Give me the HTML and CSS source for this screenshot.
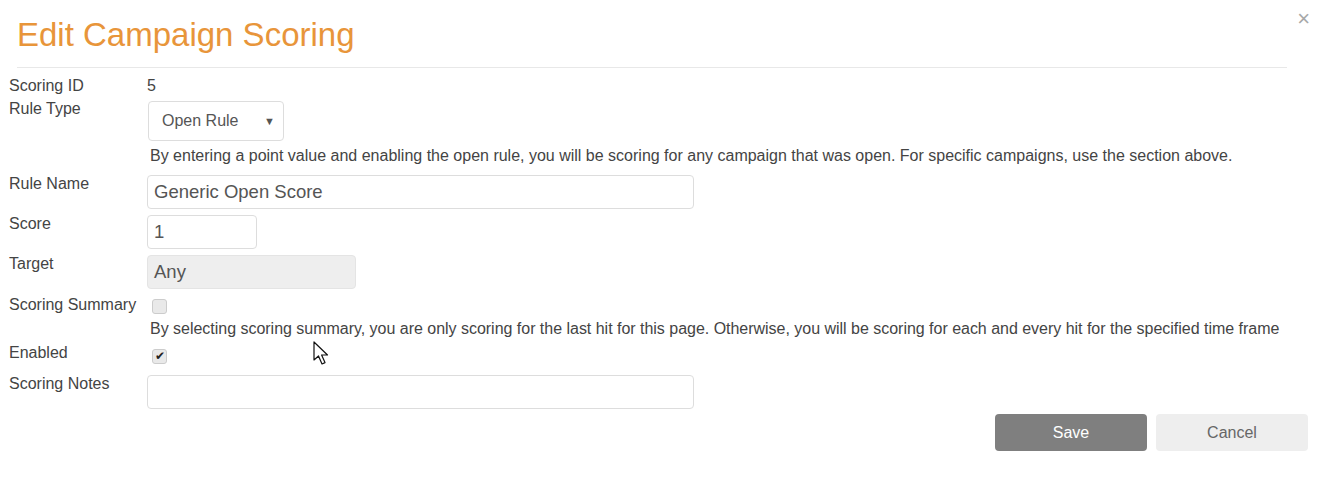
FILE: index.html
```html
<!DOCTYPE html>
<html>
<head>
<meta charset="utf-8">
<link rel="stylesheet" href="styles.css">
</head>
<body>
<div class="modal">
  <div class="header">
    <h1 class="title">Edit Campaign Scoring</h1>
    <span class="close">×</span>
  </div>
  <div class="form">
    <div class="row r-id">
      <div class="label">Scoring ID</div>
      <div class="value">5</div>
    </div>
    <div class="row r-type">
      <div class="label">Rule Type</div>
      <div class="value">
        <div class="select"><span>Open Rule</span><span class="caret">▼</span></div>
        <div class="help help1">By entering a point value and enabling the open rule, you will be scoring for any campaign that was open. For specific campaigns, use the section above.</div>
      </div>
    </div>
    <div class="row r-input r-first">
      <div class="label">Rule Name</div>
      <div class="value"><div class="input wide">Generic Open Score</div></div>
    </div>
    <div class="row r-input">
      <div class="label">Score</div>
      <div class="value"><div class="input small">1</div></div>
    </div>
    <div class="row r-input">
      <div class="label">Target</div>
      <div class="value"><div class="input mid disabled">Any</div></div>
    </div>
    <div class="row r-check">
      <div class="label">Scoring Summary</div>
      <div class="value">
        <div class="checkbox"></div>
        <div class="help help2">By selecting scoring summary, you are only scoring for the last hit for this page. Otherwise, you will be scoring for each and every hit for the specified time frame</div>
      </div>
    </div>
    <div class="row r-enabled">
      <div class="label">Enabled</div>
      <div class="value"><div class="checkbox checked">✔</div></div>
    </div>
    <div class="row r-input r-notes">
      <div class="label">Scoring Notes</div>
      <div class="value"><div class="input wide"></div></div>
    </div>
  </div>
  <div class="actions">
    <button class="btn save">Save</button>
    <button class="btn cancel">Cancel</button>
  </div>
  <svg class="cursor" width="18" height="26" viewBox="0 0 18 26"><path d="M1 1 L1 19 L5.5 15 L9 23 L12 21.6 L8.6 14 L14.5 14 Z" fill="#fff" stroke="#111" stroke-width="1.2" stroke-linejoin="round"/></svg>
</div>
</body>
</html>
```
FILE: styles.css
```css
html, body { margin: 0; padding: 0; background: #fff; }
body { font-family: "Liberation Sans", Arial, sans-serif; color: #444; }
.modal { position: relative; width: 1319px; height: 478px; }
.header { position: relative; margin: 0 32px 0 17px; border-bottom: 1px solid #e8e8e8; height: 67px; }
.title { margin: 0; padding-top: 16px; font-weight: normal; font-size: 33px; line-height: 38px; color: #e8953a; }
.close { position: absolute; right: -23px; top: 7px; font-size: 22px; color: #a8a8a8; line-height: 24px; }
.form { padding: 9px 0 0 9px; font-size: 16px; }
.row { display: grid; grid-template-columns: 138px 1fr; }
.label { line-height: 18px; color: #444; }
.value { min-width: 0; }
.r-id { height: 17px; }
.r-id .label, .r-id .value { line-height: 18px; }
.r-type { margin-top: 6px; }
.select { box-sizing: border-box; width: 136px; height: 40px; border: 1px solid #ddd; border-radius: 4px; display: flex; align-items: center; justify-content: space-between; padding: 0 8px 0 13px; margin: 1px 0 0 1px; font-size: 16px; color: #555; }
.caret { font-size: 11px; color: #555; }
.help { font-size: 16px; color: #444; line-height: 18px; white-space: nowrap; margin-left: 3px; }
.help2 { letter-spacing: -0.02px; }
.help1 { margin-top: 6px; }
.r-input { margin-top: 6px; }
.r-first { margin-top: 10px; }
.input { box-sizing: border-box; height: 34px; border: 1px solid #ddd; border-radius: 4px; padding: 0 6px; font-size: 18.5px; line-height: 32px; color: #555; background: #fff; }
.wide { width: 547px; }
.small { width: 110px; }
.mid { width: 209px; }
.disabled { background: #eee; border-color: #e4e4e4; }
.r-check { margin-top: 7px; }
.checkbox { box-sizing: border-box; width: 15px; height: 15px; border: 1px solid #ccc; border-radius: 3px; background: #e9e9e9; margin: 3px 0 0 5px; font-size: 12px; line-height: 13px; text-align: center; color: #222; }
.help2 { margin-top: 6px; }
.r-enabled { margin-top: 6px; }
.r-enabled .checkbox { margin-top: 5px; }
.r-notes { margin-top: 11px; }
.actions { display: flex; justify-content: flex-end; gap: 9px; padding: 5px 11px 0 0; }
.btn { width: 152px; height: 37px; border: none; border-radius: 4px; font-family: "Liberation Sans", Arial, sans-serif; font-size: 16px; }
.save { background: #7f7f7f; color: #fff; }
.cancel { background: #eeeeee; color: #666; }
.cursor { position: absolute; left: 313px; top: 341px; }
```
